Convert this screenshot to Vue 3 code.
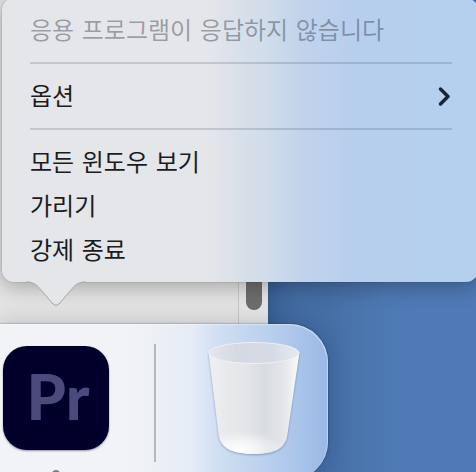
<template>
    <main class="desktop">
        <div class="window">
            <div class="scroll-track">
                <div class="scroll-thumb"></div>
            </div>
        </div>

        <nav class="menu">
            <button class="item" disabled>응용 프로그램이 응답하지 않습니다</button>
            <hr />
            <button class="item" aria-haspopup="menu">
                옵션
                <svg class="chevron" width="14" height="22" viewBox="0 0 14 22" aria-hidden="true">
                    <path d="M2.500 3 10 10.500 2.500 18" />
                </svg>
            </button>
            <hr />
            <button v-for="action in actions" :key="action" class="item">{{ action }}</button>

            <svg class="tail" width="60" height="27" viewBox="0 0 60 27" aria-hidden="true">
                <path class="tail-fill" d="M0 0V2C8 2 11 5 15 10L27 24Q30 27 33 24L45 10C49 5 52 2 60 2V0Z" />
                <path class="tail-edge" d="M0 2C8 2 11 5 15 10L27 24Q30 27 33 24L45 10C49 5 52 2 60 2" />
            </svg>
        </nav>

        <footer class="dock">
            <button class="app">
                <span class="premiere">Pr</span>
                <span class="running"></span>
            </button>
            <div class="divider"></div>
            <button class="trash" aria-haspopup="menu">
                <svg width="100" height="122" viewBox="0 0 100 122" aria-hidden="true">
                    <defs>
                        <linearGradient id="body" x1="0" x2="1">
                            <stop offset="0" stop-color="#eef0f2" />
                            <stop offset="0.2" stop-color="#e8e9eb" />
                            <stop offset="0.42" stop-color="#e3e5e8" />
                            <stop offset="0.62" stop-color="#d9dde1" />
                            <stop offset="0.82" stop-color="#e3e5e8" />
                            <stop offset="1" stop-color="#fafbfc" />
                        </linearGradient>
                        <linearGradient id="inside" x1="0" x2="1">
                            <stop offset="0" stop-color="#e4e7eb" />
                            <stop offset="0.3" stop-color="#d5d9e2" />
                            <stop offset="0.7" stop-color="#d5dbe6" />
                            <stop offset="1" stop-color="#e6e9ef" />
                        </linearGradient>
                        <radialGradient id="base" cx="0.35" cy="0.95" r="0.5" gradientTransform="matrix(1 0 0 .35 0 .62)">
                            <stop offset="0" stop-color="#fff" />
                            <stop offset="1" stop-color="#fff" stop-opacity="0" />
                        </radialGradient>
                    </defs>
                    <path class="bin" fill="url(#body)" d="M4.500 12 14.500 94C16 108 28 114 50 114S82 108 83.500 94L95.500 12Z" />
                    <path fill="url(#base)" d="M4.500 12 14.500 94C16 108 28 114 50 114S82 108 83.500 94L95.500 12Z" />
                    <ellipse cx="50" cy="13" rx="45" ry="10.500" fill="url(#inside)" stroke="#eef1f5" stroke-width="1" />
                </svg>
            </button>
        </footer>
    </main>
</template>

<script setup>
const actions = ['모든 윈도우 보기', '가리기', '강제 종료']
</script>

<style>
body {
    margin: 0;
    background: #4f7ab7;
}
</style>

<style scoped>
.desktop {
    position: relative;
    box-sizing: border-box;
    height: 100vh;
    overflow: hidden;
    display: flex;
    flex-direction: column;
    align-items: flex-start;
    gap: 42px;
    background: linear-gradient(90deg, #416a9f 268px, #466fa6 330px, #4d79b3 385px, #4f7ab7 420px);
    font-family: "DejaVu Sans", "Noto Sans CJK KR", sans-serif;
}

button {
    margin: 0;
    padding: 0;
    border: none;
    background: none;
    font: inherit;
    color: inherit;
}

.window {
    position: absolute;
    top: 0;
    left: 0;
    width: 268px;
    height: 350px;
    display: flex;
    justify-content: flex-end;
    background: #e4e4e4;
    box-shadow: 0 0 24px rgba(0, 20, 60, 0.3);
}

.scroll-track {
    width: 29px;
    display: flex;
    justify-content: center;
    border-left: 1px solid #c9c9c9;
    background: #e6e6e6;
}

.scroll-thumb {
    width: 16px;
    height: 310px;
    border-radius: 8px;
    background: #6e6e6e;
}

.menu {
    position: relative;
    align-self: stretch;
    margin: -2px -2px 0 2px;
    padding: 10px 26px 10px 28px;
    border-radius: 12px;
    background: linear-gradient(90deg, #e5e6e9 205px, #d9e1e9 234px, #d1dde9 262px, #c1d3ec 300px, #b7cfec 350px, #b4d0ee 430px);
    box-shadow: 0 0 1px rgba(0, 0, 0, 0.6), 0 4px 22px rgba(0, 0, 0, 0.3);
}

.item {
    box-sizing: border-box;
    width: 100%;
    height: 44px;
    padding-top: 2px;
    display: flex;
    align-items: center;
    justify-content: space-between;
    color: #1a1c20;
    font-size: 24px;
    line-height: 42px;
    text-align: left;
    white-space: nowrap;
}

.item:disabled {
    color: rgba(25, 35, 50, 0.38);
}

hr {
    height: 2px;
    margin: 10px 0;
    border: none;
    background: rgba(40, 60, 80, 0.18);
}

.chevron path {
    fill: none;
    stroke: #1b2330;
    stroke-width: 3.5;
    stroke-linecap: round;
    stroke-linejoin: round;
}

.tail {
    position: absolute;
    top: calc(100% - 2px);
    left: 24px;
}

.tail-fill {
    fill: #e5e6e9;
}

.tail-edge {
    fill: none;
    stroke: #a4a6a8;
    stroke-width: 1;
}

.dock {
    position: relative;
    box-sizing: border-box;
    flex: none;
    width: 328px;
    height: 156px;
    padding: 16px 24px 0 3px;
    display: flex;
    align-items: flex-start;
    border-radius: 0 38px 38px 0;
    background: linear-gradient(90deg, #f1f3f7 120px, #ecf0f5 160px, #e5ecf7 192px, #cfdef2 220px, #b9cfee 270px, #9bb9e6 326px);
    box-shadow: inset -1px 1px 1px rgba(255, 255, 255, 0.4), 0 0 2px rgba(0, 0, 0, 0.5), 0 0 24px rgba(0, 20, 60, 0.2);
}

.app {
    display: flex;
    flex-direction: column;
    align-items: center;
    gap: 20px;
    padding-top: 6px;
}

.premiere {
    box-sizing: border-box;
    width: 106px;
    height: 104px;
    padding-left: 4px;
    border-radius: 24px;
    background: #00002a;
    box-shadow: 0 1px 2px rgba(0, 0, 40, 0.4);
    color: #4b4a7c;
    font-family: Lato, sans-serif;
    font-size: 63px;
    font-weight: 900;
    line-height: 100px;
    text-align: center;
}

.running {
    width: 8px;
    height: 8px;
    border-radius: 50%;
    background: #77797c;
}

.divider {
    width: 2px;
    height: 118px;
    margin: 4px 48px 0 45px;
    background: #b4b8bc;
}

.trash svg {
    display: block;
}

.bin {
    filter: drop-shadow(0 1px 1px rgba(50, 70, 110, 0.4));
}
</style>
